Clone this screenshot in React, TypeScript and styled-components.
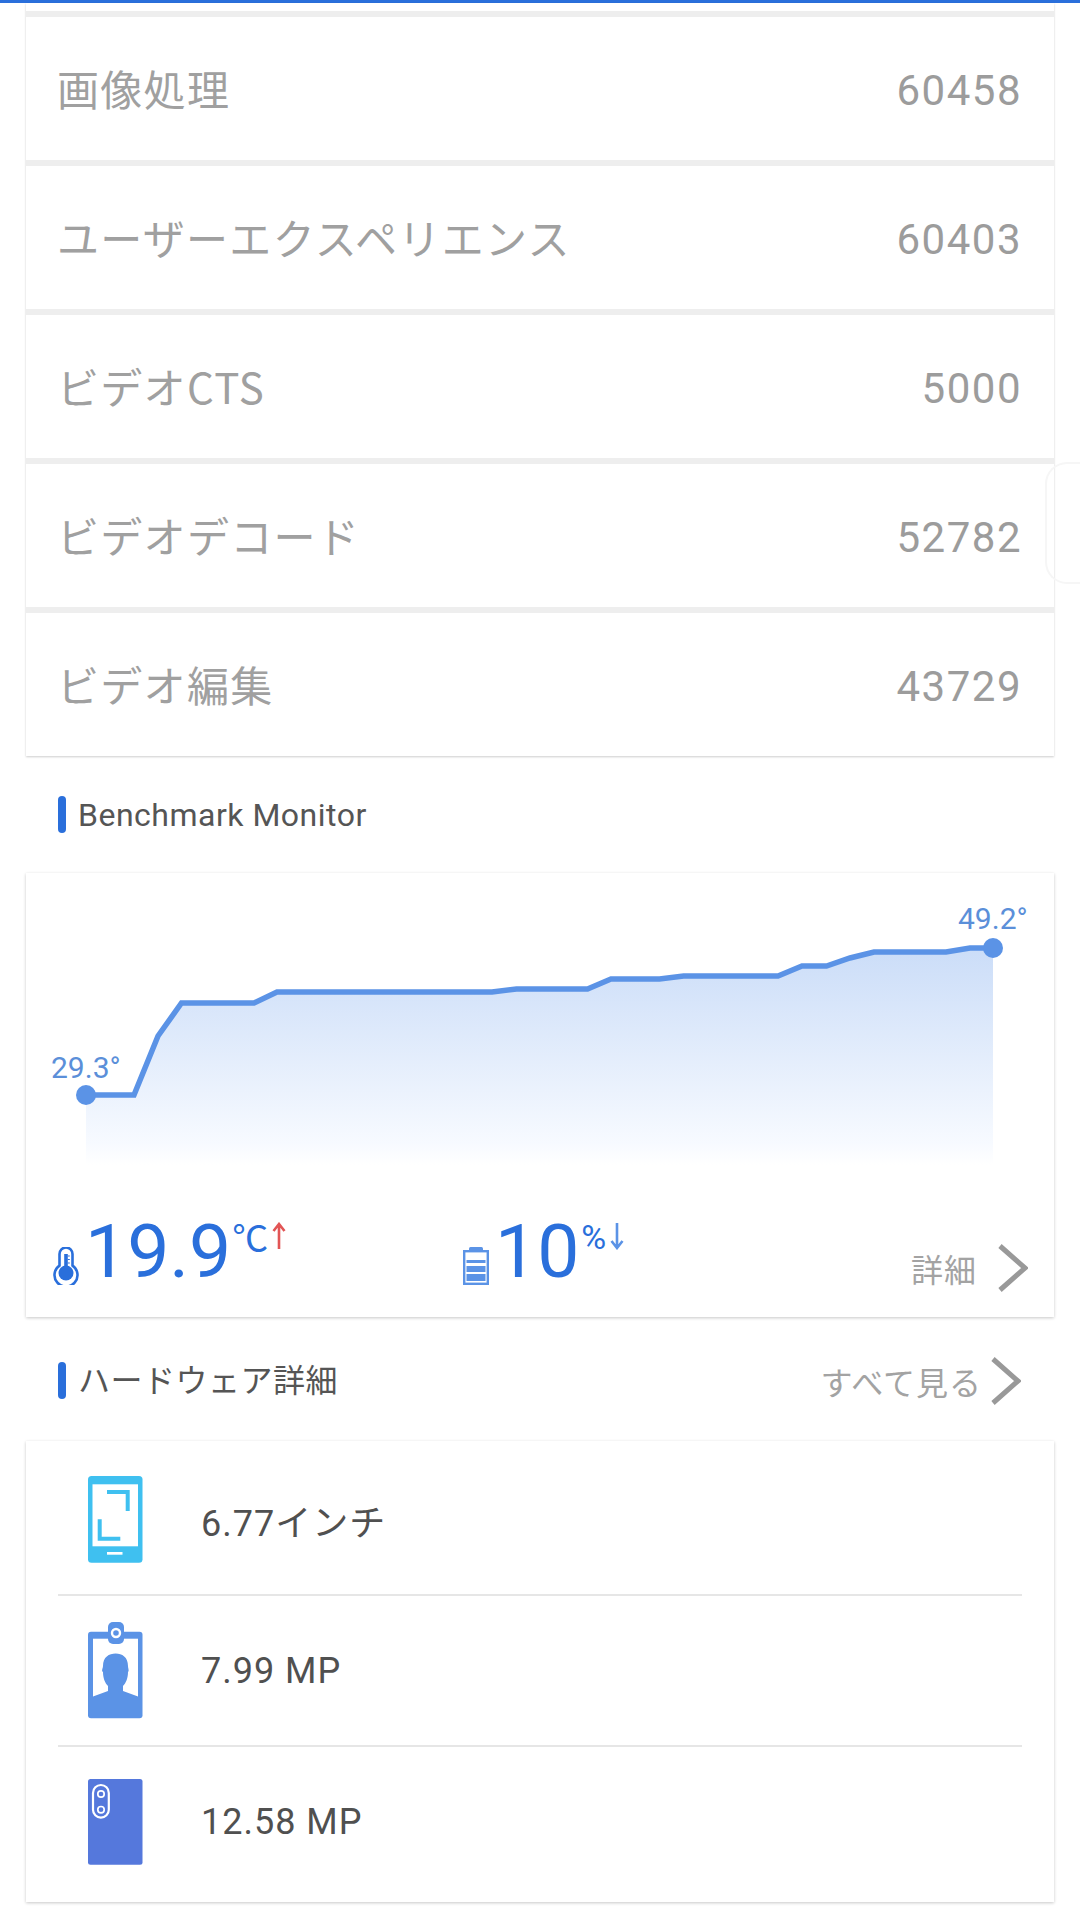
import React from 'react';
import styled, { createGlobalStyle } from 'styled-components';

const GlobalStyle = createGlobalStyle`
  html, body {
    margin: 0;
    padding: 0;
    background: #ffffff;
  }
  body {
    font-family: Roboto, "Noto Sans CJK JP", sans-serif;
  }
`;

const scores = [
  { label: '画像処理', value: '60458' },
  { label: 'ユーザーエクスペリエンス', value: '60403' },
  { label: 'ビデオCTS', value: '5000' },
  { label: 'ビデオデコード', value: '52782' },
  { label: 'ビデオ編集', value: '43729' },
];

const linePoints: [number, number][] = [
  [60, 222], [108, 222], [132, 163], [155.5, 130], [228, 130], [251, 119], [466, 119],
  [490.5, 116], [561.5, 116], [585, 106], [633.5, 106], [657.6, 103], [752, 103],
  [776, 93], [800.5, 93], [824, 85], [848, 79], [920, 79], [944, 75], [967, 75],
];

const lineString = linePoints.map((p) => p.join(',')).join(' ');

const Chevron: React.FC = () => (
  <ChevronSvg viewBox="0 0 30 48">
    <path d="M2 2 L27 24 L2 46" fill="none" stroke="#999999" strokeWidth="5" />
  </ChevronSvg>
);

export default function App() {
  return (
    <Page>
      <GlobalStyle />
      <TopBar />
      <ScoreList>
        <CutCard />
        {scores.map((s) => (
          <ScoreCard key={s.label}>
            <ScoreLabel>{s.label}</ScoreLabel>
            <ScoreValue>{s.value}</ScoreValue>
          </ScoreCard>
        ))}
      </ScoreList>
      <EdgeHandle />

      <SectionHeader>
        <SectionTitle>Benchmark Monitor</SectionTitle>
      </SectionHeader>

      <MonitorCard>
        <ChartSvg viewBox="0 0 1028 295">
          <defs>
            <linearGradient id="area" x1="0" y1="0" x2="0" y2="1">
              <stop offset="0" stopColor="#cbddf8" />
              <stop offset="0.9" stopColor="#f7faff" />
              <stop offset="1" stopColor="#ffffff" />
            </linearGradient>
          </defs>
          <polygon points={`${lineString} 967,292 60,292`} fill="url(#area)" />
          <polyline points={lineString} fill="none" stroke="#5b93e6" strokeWidth="5.5" />
          <circle cx="60" cy="222" r="10" fill="#5b93e6" />
          <circle cx="967" cy="75" r="10" fill="#5b93e6" />
          <ChartLabel x="25" y="205">29.3°</ChartLabel>
          <ChartLabel x="932" y="56">49.2°</ChartLabel>
        </ChartSvg>
        <StatsRow>
          <Stat>
            <svg width="26" height="38" viewBox="0 0 26 38">
              <path d="M6.5 7a6.5 6.5 0 0 1 13 0v11.6a11.5 11.5 0 1 1-13 0z" fill="none" stroke="#2a6fdb" strokeWidth="2.6" />
              <circle cx="13" cy="26" r="7.5" fill="#2a6fdb" />
              <rect x="11.2" y="7" width="3.6" height="16" fill="#2a6fdb" />
              <path d="M14.8 9h2M14.8 12.5h2M14.8 16h2" stroke="#2a6fdb" strokeWidth="1.2" />
            </svg>
            <StatNumber>19.9</StatNumber>
            <StatUnit>℃</StatUnit>
            <svg width="14" height="28" viewBox="0 0 14 28">
              <path d="M7 27V2M1.5 9L7 2l5.5 7" fill="none" stroke="#e25555" strokeWidth="2.6" />
            </svg>
          </Stat>
          <BatteryStat>
            <svg width="26" height="38" viewBox="0 0 26 38">
              <rect x="6" y="0" width="14" height="4" rx="1.5" fill="#5b93e6" />
              <rect x="1.2" y="4.2" width="23.6" height="32.6" fill="none" stroke="#5b93e6" strokeWidth="2.4" />
              <rect x="3.5" y="13" width="19" height="3" fill="#5b93e6" />
              <rect x="3.5" y="19" width="19" height="6" fill="#5b93e6" />
              <rect x="3.5" y="27" width="19" height="7" fill="#5b93e6" />
            </svg>
            <StatNumber>10</StatNumber>
            <PercentUnit>%</PercentUnit>
            <svg width="14" height="28" viewBox="0 0 14 28">
              <path d="M7 1v25M1.5 19L7 26l5.5-7" fill="none" stroke="#5b93e6" strokeWidth="2.6" />
            </svg>
          </BatteryStat>
          <DetailLink>
            <LinkText>詳細</LinkText>
            <Chevron />
          </DetailLink>
        </StatsRow>
      </MonitorCard>

      <HardwareHeader>
        <SectionTitle>ハードウェア詳細</SectionTitle>
        <SeeAll>
          <LinkText>すべて見る</LinkText>
          <Chevron />
        </SeeAll>
      </HardwareHeader>

      <HardwareCard>
        <HardwareRow>
          <IconSlot>
            <svg width="55" height="87" viewBox="0 0 55 87">
              <rect width="54.5" height="86.7" rx="3.5" fill="#3fc0f0" />
              <rect x="4.5" y="8.3" width="45.5" height="62" fill="#ffffff" />
              <path d="M19 16H39.7V35M11.7 43.3V62.7H32.3" fill="none" stroke="#3fc0f0" strokeWidth="4" />
              <rect x="19" y="76" width="15.5" height="2.7" fill="#ffffff" />
            </svg>
          </IconSlot>
          <HardwareText>6.77インチ</HardwareText>
        </HardwareRow>
        <HardwareRow>
          <IconSlot>
            <svg width="55" height="97" viewBox="0 0 55 97">
              <rect y="9.7" width="54.5" height="86.5" rx="3" fill="#5b93e6" />
              <rect x="5" y="16.7" width="45" height="65" fill="#ffffff" />
              <path d="M5 74.5L20 69V64C17 61 15 56 15 50C13 49 15 46 15 44C15 35 21 31.5 27.7 31.5C34 31.5 40 35 40 44C40 46 41.5 49 40 50C40 56 38 61 35 64V69L50 74.5V82H5Z" fill="#5b93e6" />
              <rect x="20" width="16" height="22" rx="5" fill="#5b93e6" />
              <circle cx="28" cy="11" r="4" fill="none" stroke="#ffffff" strokeWidth="2.4" />
            </svg>
          </IconSlot>
          <HardwareText>7.99 MP</HardwareText>
        </HardwareRow>
        <HardwareRow>
          <IconSlot>
            <svg width="55" height="86" viewBox="0 0 55 86">
              <rect width="54.5" height="85.7" rx="2.5" fill="#5578dc" />
              <rect x="5" y="6" width="15.8" height="32.6" rx="7.9" fill="#5578dc" stroke="#ffffff" strokeWidth="2.2" />
              <circle cx="13" cy="15" r="3.2" fill="none" stroke="#ffffff" strokeWidth="1.7" />
              <circle cx="13" cy="30.7" r="3.2" fill="none" stroke="#ffffff" strokeWidth="1.7" />
            </svg>
          </IconSlot>
          <HardwareText>12.58 MP</HardwareText>
        </HardwareRow>
      </HardwareCard>
    </Page>
  );
}

const Page = styled.div`
  position: relative;
  width: 1080px;
  height: 1912px;
  overflow: hidden;
  background: #ffffff;
`;

const TopBar = styled.div`
  height: 3px;
  background: #2a6fdb;
`;

const ScoreList = styled.div`
  margin: 0 26px;
  display: flex;
  flex-direction: column;
  gap: 6px;
  background: #eeeeee;
  box-shadow: 0 1px 2px rgba(0, 0, 0, 0.2);
`;

const CutCard = styled.div`
  height: 8px;
  background: #ffffff;
`;

const ScoreCard = styled.div`
  height: 143px;
  box-sizing: border-box;
  padding: 0 32px 0 31px;
  background: #ffffff;
  display: flex;
  align-items: center;
  justify-content: space-between;
`;

const ScoreLabel = styled.span`
  font-family: "Noto Sans CJK JP", Roboto, sans-serif;
  font-size: 42px;
  font-weight: 400;
  letter-spacing: 1.3px;
  margin-bottom: 3px;
  color: #a0a0a0;
`;

const ScoreValue = styled.span`
  font-family: Roboto, sans-serif;
  font-size: 42px;
  letter-spacing: 1.5px;
  margin-top: 4px;
  color: #9c9c9c;
`;

const EdgeHandle = styled.div`
  position: absolute;
  left: 1045px;
  top: 462px;
  width: 40px;
  height: 122px;
  box-sizing: border-box;
  border: 2px solid #f6f6f6;
  border-right: none;
  border-radius: 22px 0 0 22px;
`;

const SectionHeader = styled.div`
  margin: 40px 0 0 58px;
  height: 38px;
  display: flex;
  align-items: center;
`;

const SectionTitle = styled.h2`
  margin: 0;
  padding-left: 20px;
  position: relative;
  font-family: Roboto, "Noto Sans CJK JP", sans-serif;
  font-size: 32px;
  font-weight: 400;
  line-height: 38px;
  letter-spacing: 0.5px;
  color: #555555;
  &::before {
    content: '';
    position: absolute;
    left: 0;
    top: 0;
    width: 8px;
    height: 37px;
    border-radius: 4px;
    background: #2a6fdb;
  }
`;

const MonitorCard = styled.div`
  margin: 39px 26px 0;
  height: 444px;
  background: #ffffff;
  box-shadow: 0 1px 3px rgba(0, 0, 0, 0.22);
  display: flex;
  flex-direction: column;
`;

const ChartSvg = styled.svg`
  display: block;
  width: 1028px;
  height: 295px;
  flex: none;
`;

const ChartLabel = styled.text`
  font-family: Roboto, sans-serif;
  font-size: 30px;
  fill: #5b8fd9;
`;

const StatsRow = styled.div`
  position: relative;
  flex: 1;
  padding: 0 27px;
  display: flex;
  align-items: flex-start;
`;

const Stat = styled.div`
  display: flex;
  align-items: flex-start;
  margin-top: 46px;
  width: 410px;
  > svg:first-child {
    margin-top: 33px;
    margin-right: 6px;
  }
  > svg:last-child {
    margin-top: 8px;
    margin-left: 4px;
  }
`;

const BatteryStat = styled(Stat)`
  width: 300px;
`;

const StatNumber = styled.span`
  font-family: Roboto, sans-serif;
  font-size: 75px;
  line-height: 75px;
  color: #2a6fdb;
`;

const StatUnit = styled.span`
  font-family: "Noto Sans CJK JP", Roboto, sans-serif;
  font-size: 36px;
  line-height: 44px;
  margin-left: 1px;
  color: #2a6fdb;
`;

const PercentUnit = styled(StatUnit)`
  font-family: Roboto, sans-serif;
  font-size: 34px;
  line-height: 46px;
  margin-left: 2px;
`;

const DetailLink = styled.div`
  position: absolute;
  right: 26px;
  top: 76px;
  display: flex;
  align-items: center;
  gap: 21px;
`;

const SeeAll = styled.div`
  display: flex;
  align-items: center;
  gap: 9px;
`;

const LinkText = styled.span`
  font-family: "Noto Sans CJK JP", Roboto, sans-serif;
  font-size: 32px;
  font-weight: 400;
  letter-spacing: 1px;
  color: #a3a3a3;
`;

const ChevronSvg = styled.svg`
  width: 30px;
  height: 48px;
  display: block;
`;

const HardwareHeader = styled.div`
  margin: 45px 59px 0 58px;
  height: 38px;
  display: flex;
  align-items: center;
  justify-content: space-between;
`;

const HardwareCard = styled.div`
  margin: 41px 26px 0;
  padding: 4px 32px 0;
  background: #ffffff;
  box-shadow: 0 1px 3px rgba(0, 0, 0, 0.22);
`;

const HardwareRow = styled.div`
  height: 151px;
  display: flex;
  align-items: center;
  border-bottom: 2px solid #e6e6e6;
  box-sizing: border-box;
  &:last-child {
    border-bottom: none;
    height: 155px;
    padding-bottom: 5px;
  }
`;

const IconSlot = styled.div`
  width: 55px;
  margin-left: 30px;
  margin-right: 58px;
  display: flex;
  align-items: center;
`;

const HardwareText = styled.span`
  font-family: Roboto, "Noto Sans CJK JP", sans-serif;
  font-size: 36px;
  letter-spacing: 1px;
  color: #505050;
`;
